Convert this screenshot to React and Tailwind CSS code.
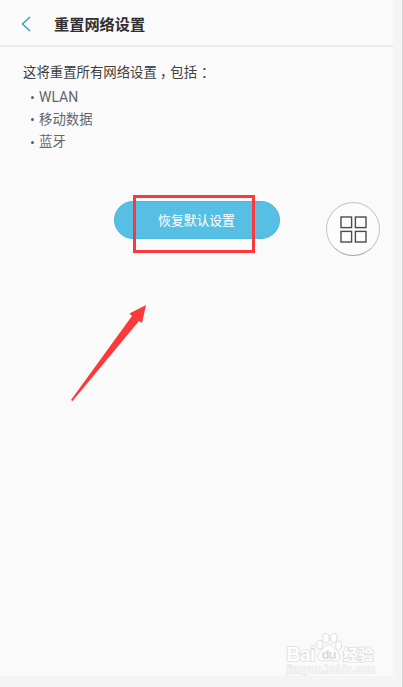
const items = [
  { name: 'WLAN', size: 'text-[14px]' },
  { name: '移动数据', size: 'text-[13.4px]' },
  { name: '蓝牙', size: 'text-[13.4px]' },
]

function Header() {
  return (
    <header className="flex h-[47px] items-center gap-[23px] border-b-2 border-[#ebebeb] px-[21px] pt-[3px]">
      <svg className="h-4 w-[10px]" viewBox="0 0 10 16" fill="none" stroke="#3d9cc4" strokeWidth="1.5">
        <path d="M9 1 L1.5 8 L9 15" />
      </svg>
      <h1 className="pt-[3px] text-[15.2px] leading-none font-bold text-[#303030]">重置网络设置</h1>
    </header>
  )
}

function ResetInfo() {
  return (
    <section className="flex flex-col gap-[2px] px-[23px] pt-[15px] text-[13.4px]">
      <p className="flex leading-[22px] text-[#3c3c3c]">
        <span>这将重置所有网络设置</span>
        <span className="w-[13.4px] pl-[3px] [font-feature-settings:'halt']">，</span>
        <span>包括</span>
        <span className="w-[13.4px] pl-[4px] [font-feature-settings:'halt']">：</span>
      </p>
      <ul className="pl-2 leading-[22.5px] text-[#63666a]">
        {items.map((item) => (
          <li key={item.name} className="flex h-[22.5px] items-center gap-[5px]">
            <span className="size-[3px] rounded-full bg-[#5c5f62]" />
            <span className={item.size}>{item.name}</span>
          </li>
        ))}
      </ul>
    </section>
  )
}

function ResetButton() {
  return (
    <div className="flex justify-center pt-[47px]">
      <div className="relative h-[38px] w-[166px]">
        <button className="h-full w-full rounded-full border border-[#49b6dc] bg-[#57bfe4] pt-[4px] text-[12.8px] leading-none text-white">
          恢复默认设置
        </button>
        <div className="absolute top-[-6px] left-[19px] h-[58px] w-[122px] border-[3px] border-[#fb383b]" />
      </div>
    </div>
  )
}

function FloatingMenu() {
  return (
    <button className="absolute top-[202px] left-[326px] flex size-[54px] items-center justify-center rounded-full border border-[#c4c4c4] border-b-[#a4a4a4] bg-[#fcfcfc]">
      <svg className="size-[27px]" viewBox="0 0 27 27" fill="none" stroke="#4d4a4b" strokeWidth="1.4">
        <rect x="1" y="1" width="10.6" height="10.6" />
        <rect x="15.4" y="1" width="10.6" height="10.6" />
        <rect x="1" y="15.4" width="10.6" height="10.6" />
        <rect x="15.4" y="15.4" width="10.6" height="10.6" />
      </svg>
    </button>
  )
}

function Arrow() {
  return (
    <svg className="absolute top-[300px] left-[66px] h-[106px] w-[86px]" viewBox="0 0 86 106" fill="#fd3838">
      <path d="M80 5 L63.5 13.5 L66 16 L5 100 L6.5 101 L73 21 L76 23 Z" />
    </svg>
  )
}

function Watermark() {
  return (
    <svg
      className="absolute top-[630px] left-[284px] h-[48px] w-[94px]"
      viewBox="0 0 94 48"
      fill="#fdfdfd"
      stroke="#dfdfdf"
      strokeWidth="1"
      fontFamily='"Liberation Sans", "Noto Sans CJK SC", sans-serif'
    >
      <ellipse cx="35.7" cy="14.5" rx="3" ry="4.3" />
      <ellipse cx="41.9" cy="8" rx="3.2" ry="4.7" />
      <ellipse cx="49.7" cy="8" rx="3.2" ry="4.7" />
      <ellipse cx="54.7" cy="15.5" rx="3" ry="4.3" />
      <path d="M45 14.5 C41 14.5 39.5 18.5 36.5 21 C31 26 34 32 40 31 C43 30.5 47 30.5 50 31 C56 32 58 26 53 21 C50 18.5 49 14.5 45 14.5 Z" />
      <text x="37.5" y="29" fontSize="13" fontWeight="700" textLength="15" fill="#dadada" stroke="none">du</text>
      <g fontWeight="700" paintOrder="stroke" strokeWidth="1.7">
        <text x="2.5" y="30.5" fontSize="19.5" textLength="29">Bai</text>
        <text x="59" y="29.5" fontSize="15.2" textLength="30.5">经验</text>
      </g>
      <text x="3" y="42.5" fontSize="10.5" textLength="88" strokeWidth="1.4" stroke="#e6e6e6" paintOrder="stroke">
        jingyan.baidu.com
      </text>
    </svg>
  )
}

export default function App() {
  return (
    <div className="relative h-[687px] w-[403px] overflow-hidden border-r border-[#d2d2d2] bg-[#f4f4f4] font-['Roboto','Noto_Sans_CJK_SC',sans-serif]">
      <main className="h-[676px] w-[393px] bg-[#fafafa]">
        <Header />
        <ResetInfo />
        <ResetButton />
      </main>
      <FloatingMenu />
      <Arrow />
      <Watermark />
    </div>
  )
}
